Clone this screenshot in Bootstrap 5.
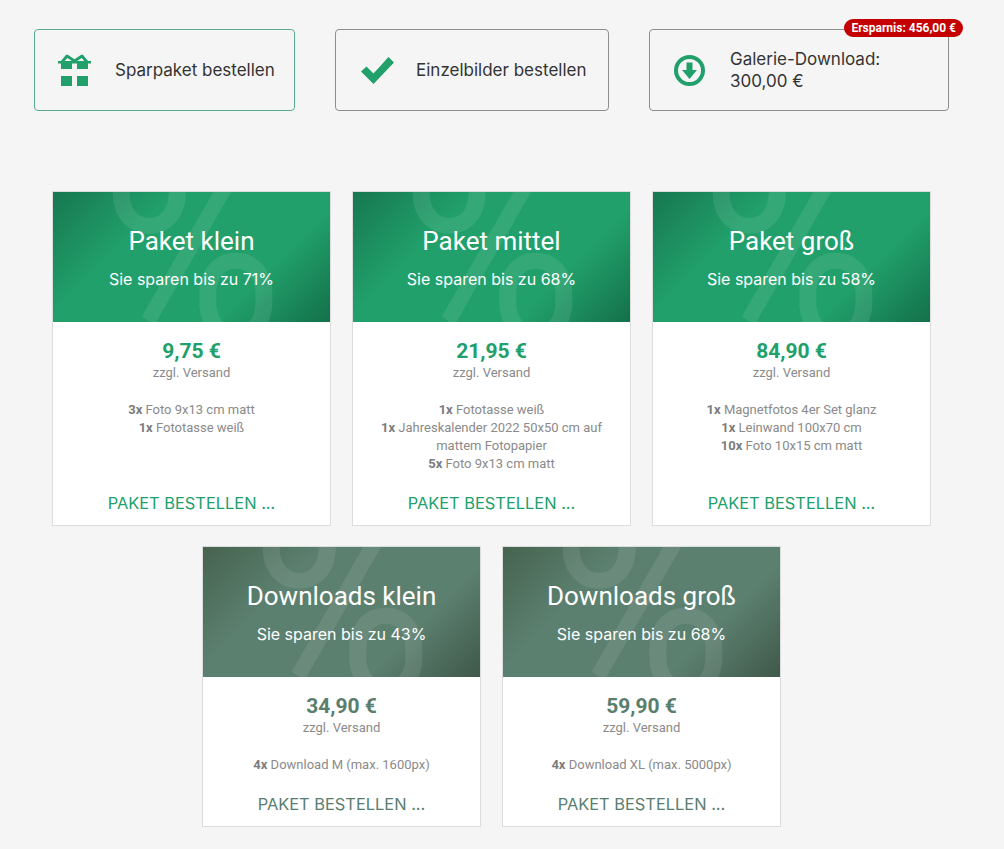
<!DOCTYPE html>
<html lang="de">
<head>
  <meta charset="UTF-8" />
  <meta name="viewport" content="width=device-width, initial-scale=1.0"/>
  <title>Sparpakete</title>
  <link href="https://cdn.jsdelivr.net/npm/bootstrap@5.3.3/dist/css/bootstrap.min.css" rel="stylesheet"/>
  <style>
    body {
      background-color: #f5f5f5;
      font-family: "Roboto", sans-serif;
      overflow-x: hidden;
    }
    .top-row {
      padding: 29px 0 0 34px;
      gap: 40px;
    }
    .order-btn {
      height: 82px;
      border: 1px solid #8e8e8e;
      border-radius: 4px;
      color: #333;
      font-family: "Inter", sans-serif;
      font-size: 17px;
      line-height: 22px;
      padding-left: 23px;
      gap: 24px;
      position: relative;
    }
    .order-btn.active-btn { border-color: #5aae8d; }
    .order-btn svg { flex: none; }
    .btn-spar { width: 261px; }
    .btn-einzel { width: 274px; padding-left: 25px; gap: 22px; }
    .btn-galerie { width: 300px; padding-left: 24px; gap: 25px; }
    .save-tag {
      position: absolute;
      top: -11px;
      right: -15px;
      height: 18px;
      padding: 0 7px;
      background: #c40000;
      color: #fff;
      border-radius: 9px;
      font: 700 12px/18px "Roboto", sans-serif;
      white-space: nowrap;
    }
    .packs {
      margin-top: 80px;
      padding-right: 21px;
      gap: 20px 21px;
    }
    .pack {
      width: 279px;
      background: #fff;
      border: 1px solid #dcdcdc;
      color: #8a8a8a;
    }
    .pack-head {
      height: 130px;
      position: relative;
      overflow: hidden;
      color: #fff;
      background: linear-gradient(135deg, #177750 0%, #21a06b 30%, #21a06b 72%, #14704a 100%);
    }
    .pack-dl .pack-head {
      background: linear-gradient(135deg, #46634f 0%, #5c8070 30%, #5c8070 72%, #3f5849 100%);
    }
    .pct {
      position: absolute;
      left: 0;
      right: 0;
      top: -81px;
      text-align: center;
      font: 400 272px/272px "Roboto", sans-serif;
      color: rgba(255,255,255,.09);
      transform: scaleX(.92);
    }
    .pack-title {
      position: relative;
      font: 400 26px/32px "Roboto", sans-serif;
      padding-top: 33px;
    }
    .pack-save {
      position: relative;
      font: 400 16px/22px "Inter", sans-serif;
      margin-top: 11px;
    }
    .pack-body {
      font-size: 13px;
      line-height: 18px;
      padding: 17px 15px 0;
    }
    .pack-price {
      font: 700 21px/24px "Roboto", sans-serif;
      color: #21a06b;
    }
    .pack-ship { margin-top: 1px; }
    .pack-dl .pack-price, .pack-dl .pack-link { color: #5a7e6e; }
    .pack-items { margin-top: 19px; }
    .pack-items b { color: #7b7b7b; }
    .pack-link {
      color: #21a06b;
      font: 400 16.4px/22px "Inter", sans-serif;
      text-decoration: none;
      display: block;
      margin-top: 19px;
      padding-bottom: 11px;
    }
  </style>
</head>
<body>
  <div class="d-flex top-row">
    <a class="order-btn active-btn btn-spar d-flex align-items-center text-decoration-none">
      <svg width="33" height="32" viewBox="0 0 33 32" fill="#21a06b">
        <path d="M0 7h33v2.500H0zM3 8h11v7H3zM19 8h11v7H19zM3 22h11v10H3zM19 22h11v10H19z"/>
        <path d="M4 8l5-6 7.500 5L24 2l5 6" fill="none" stroke="#21a06b" stroke-width="2.800" stroke-linejoin="round"/>
      </svg>
      <span>Sparpaket bestellen</span>
    </a>
    <a class="order-btn btn-einzel d-flex align-items-center text-decoration-none">
      <svg width="33" height="28" viewBox="0 0 33 28" fill="#21a06b"><path d="M0 15.500l5.500-5 7 7L27.500 1l5.500 5.500L12.500 28z"/></svg>
      <span>Einzelbilder bestellen</span>
    </a>
    <a class="order-btn btn-galerie d-flex align-items-center text-decoration-none">
      <svg width="31" height="31" viewBox="0 0 31 31" fill="#21a06b">
        <circle cx="15.500" cy="15.500" r="13.500" fill="none" stroke="#21a06b" stroke-width="4"/>
        <path d="M12.500 7.500h6V15h4.500l-7.500 9L8 15h4.500z"/>
      </svg>
      <span>Galerie-Download:<br>300,00 €</span>
      <span class="save-tag">Ersparnis: 456,00 €</span>
    </a>
  </div>

  <div class="d-flex flex-wrap justify-content-center packs">
    <div class="pack text-center d-flex flex-column">
      <div class="pack-head"><div class="pct">%</div><div class="pack-title">Paket klein</div><div class="pack-save">Sie sparen bis zu 71%</div></div>
      <div class="pack-body flex-grow-1">
        <div class="pack-price">9,75 €</div><div class="pack-ship">zzgl. Versand</div>
        <div class="pack-items"><b>3x</b> Foto 9x13 cm matt<br><b>1x</b> Fototasse weiß</div>
      </div>
      <a class="pack-link">PAKET BESTELLEN ...</a>
    </div>
    <div class="pack text-center d-flex flex-column">
      <div class="pack-head"><div class="pct">%</div><div class="pack-title">Paket mittel</div><div class="pack-save">Sie sparen bis zu 68%</div></div>
      <div class="pack-body flex-grow-1">
        <div class="pack-price">21,95 €</div><div class="pack-ship">zzgl. Versand</div>
        <div class="pack-items"><b>1x</b> Fototasse weiß<br><b>1x</b> Jahreskalender 2022 50x50 cm auf mattem Fotopapier<br><b>5x</b> Foto 9x13 cm matt</div>
      </div>
      <a class="pack-link">PAKET BESTELLEN ...</a>
    </div>
    <div class="pack text-center d-flex flex-column">
      <div class="pack-head"><div class="pct">%</div><div class="pack-title">Paket groß</div><div class="pack-save">Sie sparen bis zu 58%</div></div>
      <div class="pack-body flex-grow-1">
        <div class="pack-price">84,90 €</div><div class="pack-ship">zzgl. Versand</div>
        <div class="pack-items"><b>1x</b> Magnetfotos 4er Set glanz<br><b>1x</b> Leinwand 100x70 cm<br><b>10x</b> Foto 10x15 cm matt</div>
      </div>
      <a class="pack-link">PAKET BESTELLEN ...</a>
    </div>
    <div class="pack pack-dl text-center d-flex flex-column">
      <div class="pack-head"><div class="pct">%</div><div class="pack-title">Downloads klein</div><div class="pack-save">Sie sparen bis zu 43%</div></div>
      <div class="pack-body flex-grow-1">
        <div class="pack-price">34,90 €</div><div class="pack-ship">zzgl. Versand</div>
        <div class="pack-items"><b>4x</b> Download M (max. 1600px)</div>
      </div>
      <a class="pack-link">PAKET BESTELLEN ...</a>
    </div>
    <div class="pack pack-dl text-center d-flex flex-column">
      <div class="pack-head"><div class="pct">%</div><div class="pack-title">Downloads groß</div><div class="pack-save">Sie sparen bis zu 68%</div></div>
      <div class="pack-body flex-grow-1">
        <div class="pack-price">59,90 €</div><div class="pack-ship">zzgl. Versand</div>
        <div class="pack-items"><b>4x</b> Download XL (max. 5000px)</div>
      </div>
      <a class="pack-link">PAKET BESTELLEN ...</a>
    </div>
  </div>
  <script src="https://cdn.jsdelivr.net/npm/bootstrap@5.3.3/dist/js/bootstrap.bundle.min.js"></script>
</body>
</html>
